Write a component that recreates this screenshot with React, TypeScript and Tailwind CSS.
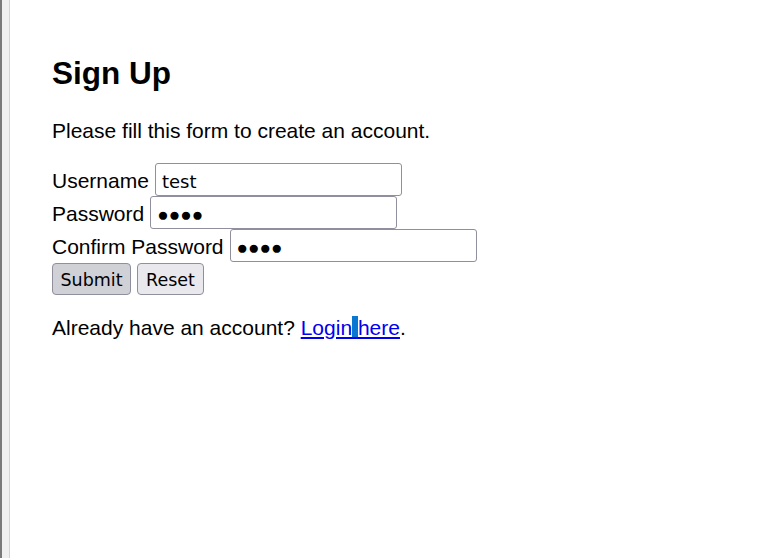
import React from "react";

const inputCls =
  "w-[247px] h-[33px] border border-[#8f8f9d] rounded-[3px] bg-white px-[6px] pt-[4px] pb-0 text-black outline-none";

export default function App() {
  return (
    <div className="flex h-[558px] w-[771px] bg-white [font-family:'Liberation_Sans',Arial,sans-serif] text-black">
      <div className="w-[10px] h-full border-l-[2px] border-l-[#7a7a7a] bg-[#f0f0f0] border-r border-r-[#d4d4d4]" />
      <div className="pl-[42px] pt-[55px]">
        <h2 className="text-[31.5px] font-bold leading-[36px]">Sign Up</h2>
        <p className="mt-[28px] text-[21px] leading-[24px]">Please fill this form to create an account.</p>
        <form className="mt-[20px] text-[21px]" onSubmit={(e) => e.preventDefault()}>
          <div className="flex items-start h-[33px]">
            <label className="mt-[6px] leading-[24px]">Username</label>
            <input className={inputCls + " ml-[6px] text-[18px] [font-family:'DejaVu_Sans',sans-serif]"} defaultValue="test" />
          </div>
          <div className="flex items-start h-[33px]">
            <label className="mt-[6px] leading-[24px]">Password</label>
            <input className={inputCls + " ml-[6px] text-[19px] [font-family:'Liberation_Sans',sans-serif]"} defaultValue="●●●●" readOnly />
          </div>
          <div className="flex items-start h-[33px]">
            <label className="mt-[6px] leading-[24px]">Confirm Password</label>
            <input className={inputCls + " ml-[6px] text-[19px] [font-family:'Liberation_Sans',sans-serif]"} defaultValue="●●●●" readOnly />
          </div>
          <div className="flex gap-[6px] mt-[1px]">
            <button type="submit" className="w-[79px] h-[32px] pt-[3px] border border-[#8f8f9d] rounded-[4px] bg-[#d0d0d7] text-[17.5px] [font-family:'DejaVu_Sans',sans-serif]">
              Submit
            </button>
            <button type="reset" className="w-[67px] h-[32px] pt-[3px] border border-[#8f8f9d] rounded-[4px] bg-[#e9e9ed] text-[17.5px] [font-family:'DejaVu_Sans',sans-serif]">
              Reset
            </button>
          </div>
        </form>
        <p className="mt-[21px] text-[21px] leading-[24px]">
          Already have an account?{" "}
          <a href="#" className="text-[#0000ee] underline">
            Login<span className="bg-[#0a78d0]"> </span>here
          </a>
          .
        </p>
      </div>
    </div>
  );
}
